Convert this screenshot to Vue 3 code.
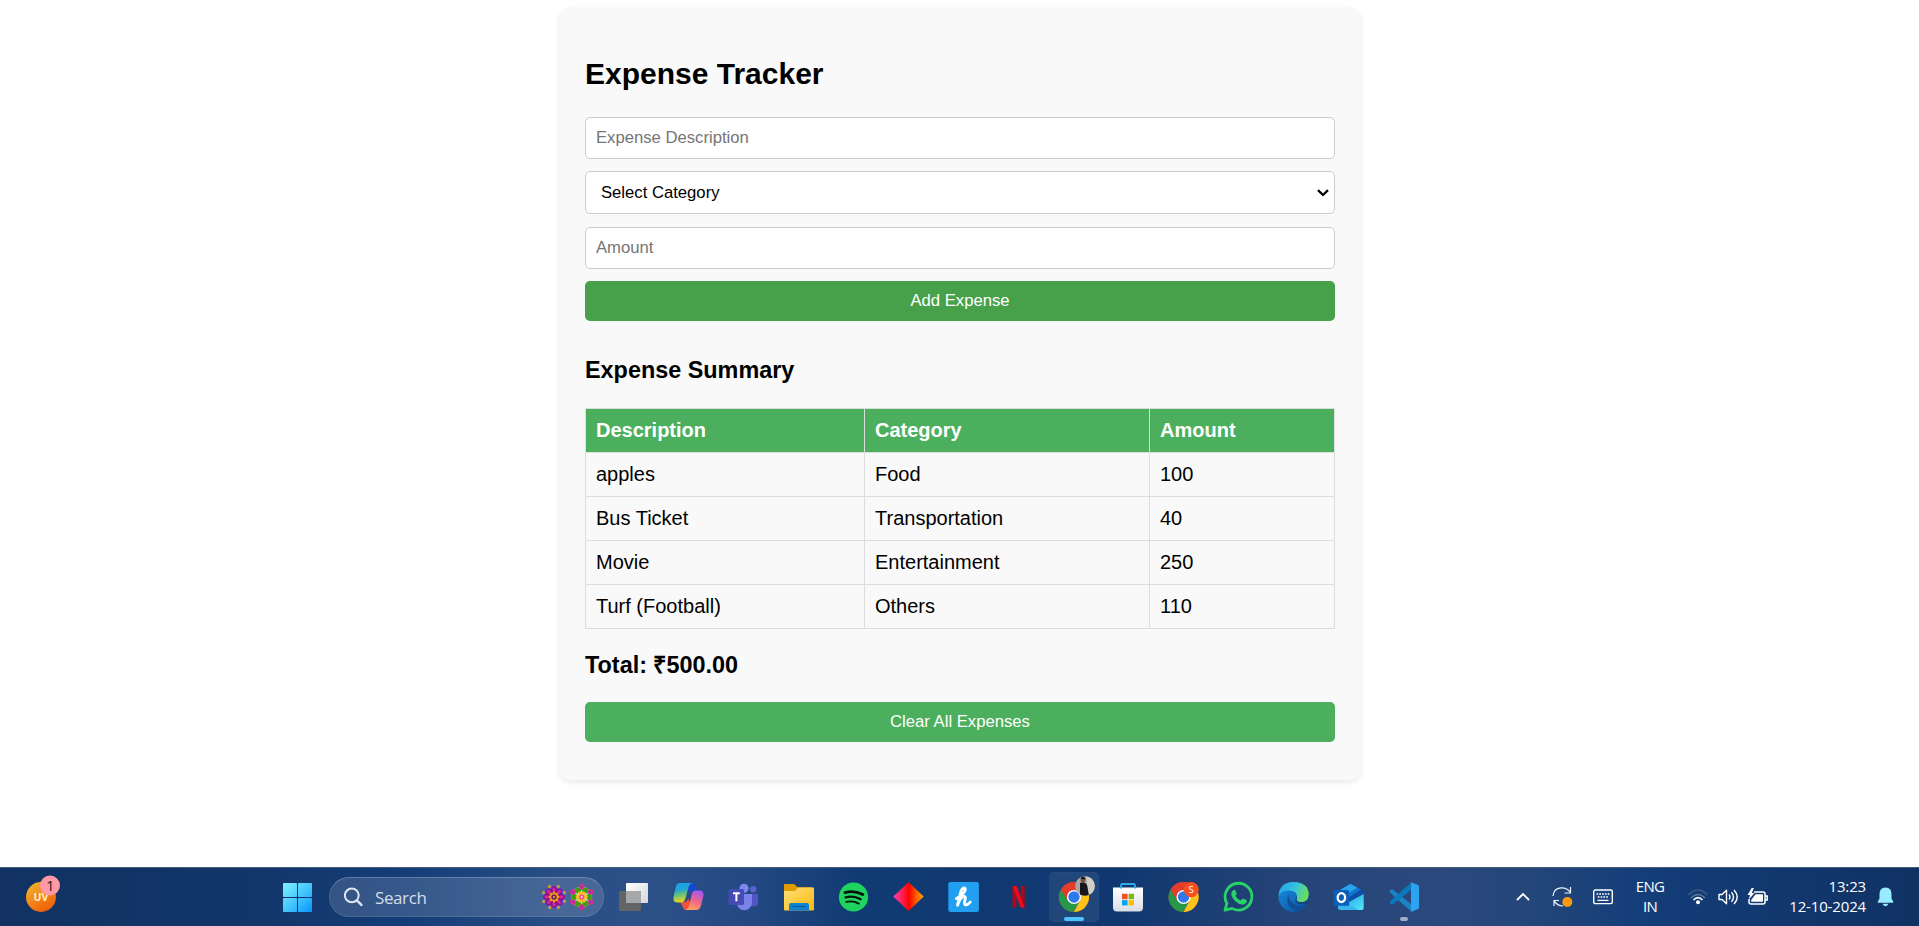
<script setup>
import { ref, computed } from 'vue'

const description = ref('')
const category = ref('')
const amount = ref('')
const expenses = ref([
  { description: 'apples', category: 'Food', amount: 100 },
  { description: 'Bus Ticket', category: 'Transportation', amount: 40 },
  { description: 'Movie', category: 'Entertainment', amount: 250 },
  { description: 'Turf (Football)', category: 'Others', amount: 110 },
])
const total = computed(() => expenses.value.reduce((sum, e) => sum + e.amount, 0).toFixed(2))

function addExpense() {
  if (!description.value || !category.value || !amount.value) return
  expenses.value.push({
    description: description.value,
    category: category.value,
    amount: Number(amount.value),
  })
}

const petals = [0, 45, 90, 135, 180, 225, 270, 315]
const sixths = [0, 60, 120, 180, 240, 300]
</script>

<template>
  <div class="screen">
    <main class="card">
      <h1>Expense Tracker</h1>
      <form class="form" @submit.prevent="addExpense">
        <input v-model="description" class="field" type="text" placeholder="Expense Description" />
        <div class="select-wrap">
          <select v-model="category" class="field select">
            <option value="">Select Category</option>
            <option>Food</option>
            <option>Transportation</option>
            <option>Entertainment</option>
            <option>Others</option>
          </select>
          <svg class="arrow" width="12" height="8" viewBox="0 0 12 8">
            <path d="M1 1.2 6 6 11 1.2" fill="none" stroke="#000" stroke-width="2.3" />
          </svg>
        </div>
        <input v-model="amount" class="field amount" type="text" placeholder="Amount" />
        <button class="btn btn-add" type="submit">Add Expense</button>
      </form>

      <h3 class="summary">Expense Summary</h3>
      <table>
        <colgroup><col class="c1" /><col class="c2" /><col class="c3" /></colgroup>
        <thead>
          <tr><th>Description</th><th>Category</th><th>Amount</th></tr>
        </thead>
        <tbody>
          <tr v-for="e in expenses" :key="e.description">
            <td>{{ e.description }}</td><td>{{ e.category }}</td><td>{{ e.amount }}</td>
          </tr>
        </tbody>
      </table>
      <h3 class="total">Total: ₹{{ total }}</h3>
      <button class="btn" type="button" @click="expenses = []">Clear All Expenses</button>
    </main>

    <footer class="taskbar">
      <svg class="defs" width="0" height="0">
        <defs>
          <linearGradient id="uv" x1="0" y1="0" x2=".7" y2="1"><stop offset="0" stop-color="#efbd32" /><stop offset=".6" stop-color="#f38118" /><stop offset="1" stop-color="#ef5d0a" /></linearGradient>
          <linearGradient id="win" gradientUnits="userSpaceOnUse" x1="0" y1="0" x2="29" y2="29"><stop offset="0" stop-color="#7ff0ff" /><stop offset=".5" stop-color="#47c8fb" /><stop offset="1" stop-color="#0796fb" /></linearGradient>
          <linearGradient id="cpA" x1="0" y1="0" x2=".2" y2="1"><stop offset="0" stop-color="#189ff1" /><stop offset=".4" stop-color="#1fa8cf" /><stop offset=".7" stop-color="#7bc768" /><stop offset="1" stop-color="#f3d21f" /></linearGradient>
          <linearGradient id="cpB" x1=".7" y1="0" x2=".3" y2="1"><stop offset="0" stop-color="#a259f1" /><stop offset=".5" stop-color="#f0628d" /><stop offset="1" stop-color="#ffa75a" /></linearGradient>
          <linearGradient id="folder" x1="0" y1="0" x2="1" y2="1"><stop offset="0" stop-color="#ffdf77" /><stop offset="1" stop-color="#fcb90f" /></linearGradient>
          <linearGradient id="dia"><stop offset="0" stop-color="#ff42ad" /><stop offset=".3" stop-color="#ff1e50" /><stop offset=".52" stop-color="#ff0000" /><stop offset=".75" stop-color="#ff5b00" /><stop offset="1" stop-color="#ffb000" /></linearGradient>
          <linearGradient id="edgeTop" x1="0" y1=".3" x2="1" y2=".6"><stop offset="0" stop-color="#25a5e8" /><stop offset=".5" stop-color="#35c3df" /><stop offset="1" stop-color="#70e04c" /></linearGradient>
          <linearGradient id="edgeBot" x1="0" y1="0" x2=".8" y2="1"><stop offset="0" stop-color="#1b8fe0" /><stop offset="1" stop-color="#0c56a8" /></linearGradient>
          <linearGradient id="store" x1="0" y1="0" x2="0" y2="1"><stop offset="0" stop-color="#fff" /><stop offset="1" stop-color="#d9dde4" /></linearGradient>
          <linearGradient id="olk" x1="0" y1="0" x2="1" y2="1"><stop offset="0" stop-color="#1a9be5" /><stop offset="1" stop-color="#58e5fa" /></linearGradient>
          <linearGradient id="tvLight" x1="0" y1="0" x2="1" y2="1"><stop offset="0" stop-color="#fff" /><stop offset="1" stop-color="#d5d7da" /></linearGradient>
          <clipPath id="avatarClip"><circle cx="39" cy="19" r="9.8" /></clipPath>
          <g id="chrome">
            <circle r="15" fill="#e33b2e" />
            <path d="M-13-7.5A15 15 0 0 0 0 15L6.1 3.5-6.1 3.5Z" fill="#279847" />
            <path d="M13-7.5A15 15 0 0 1 0 15L6.1 3.5 5-7Z" fill="#fcc31a" />
            <path d="M-13-7.5A15 15 0 0 1 13-7.5L0-7-6 3.6Z" fill="#e33b2e" />
            <circle r="7.1" fill="#fff" />
            <circle r="5.7" fill="#2f79ec" />
          </g>
        </defs>
      </svg>

      <svg class="widget" width="36" height="59" viewBox="0 0 36 59">
        <circle cx="15" cy="30" r="15" fill="url(#uv)" />
        <text x="15" y="33.8" text-anchor="middle" class="uv">UV</text>
        <circle cx="24" cy="18.5" r="10" fill="#ff98a5" />
        <text x="24.2" y="23.6" text-anchor="middle" class="one">1</text>
      </svg>

      <svg class="start" width="29" height="29" viewBox="0 0 29 29" fill="url(#win)">
        <rect width="14" height="14" rx=".8" /><rect x="15" width="14" height="14" rx=".8" />
        <rect y="15" width="14" height="14" rx=".8" /><rect x="15" y="15" width="14" height="14" rx=".8" />
      </svg>

      <div class="search">
        <svg width="19" height="20" viewBox="0 0 19 20" fill="none" stroke="#e1e7f0" stroke-width="2"><circle cx="7.8" cy="8.3" r="6.9" /><path d="m12.800 13.300 4.600 4.600" stroke-width="2.4" stroke-linecap="round" /></svg>
        <span>Search</span>
        <svg class="flowers" width="54" height="28" viewBox="0 0 54 28">
          <g transform="translate(13 14)">
            <g v-for="a in petals" :key="a" :transform="`rotate(${a + 22})`">
              <ellipse cy="-9.4" rx="3.4" ry="2.8" fill="#4164ef" />
              <circle cy="-11.4" r="1.6" fill="#c69a32" />
            </g>
            <circle r="9" fill="#7a1480" />
            <g v-for="a in petals" :key="'m' + a" :transform="`rotate(${a})`">
              <ellipse cy="-8" rx="2.8" ry="3" fill="#8c168f" />
              <ellipse cy="-7.2" rx="1.4" ry="2.2" fill="#df249c" />
              <circle cy="-4" r="1.4" fill="#f5a812" />
            </g>
            <circle r="3.8" fill="#ee9516" /><circle r="2.6" fill="#6b176b" /><circle r="1" fill="#f1b63d" />
          </g>
          <g transform="translate(40.7 14)">
            <circle r="10.500" fill="#bfe7dd" />
            <g v-for="a in sixths" :key="a" :transform="`rotate(${a})`">
              <circle cy="-10" r="2.9" fill="#e72398" /><circle cy="-9.7" r="1" fill="#6848c6" />
            </g>
            <g v-for="a in sixths" :key="'g' + a" :transform="`rotate(${a + 30})`">
              <circle cy="-7.5" r="3.1" fill="#459b13" />
              <circle cy="-4" r="2" fill="#ffc22b" />
            </g>
            <circle r="4.4" fill="#ffbd24" /><circle r="2.6" fill="#ef4b9a" /><circle r="1.1" fill="#ffe6b0" />
          </g>
        </svg>
      </div>

      <div class="apps">
        <!-- Task view -->
        <svg viewBox="0 0 55 59"><rect x="13" y="24" width="22" height="20" rx="1" fill="#626466" /><rect x="20" y="16" width="22" height="20" rx=".8" fill="url(#tvLight)" /><rect x="20" y="24" width="15" height="12" fill="#a5a7a9" /></svg>
        <!-- Copilot -->
        <svg viewBox="0 0 55 59">
          <path d="M27 16h4.500q2.600 0 3.400 3l1.400 5H30q-3 0-4 3Z" fill="#1747cf" />
          <path d="M19.500 35h5l3-3 3 8-1.500 3h-3.500q-3 0-4-3.500Z" fill="#f0543c" />
          <path d="M18.800 16H32q-3.500.4-4.400 4l-3.200 11.500q-1 4-4.800 4h-3.300q-5 0-3.700-5.700L14.800 20q1-4 4-4Z" fill="url(#cpA)" />
          <path d="M34.500 23.400h3.700q5.200 0 4.100 5.600L40 38.500Q38.800 43 35.200 43H23.500q3.500-.4 4.500-4l2.700-11.500q1-4.100 3.800-4.100Z" fill="url(#cpB)" />
        </svg>
        <!-- Teams -->
        <svg viewBox="0 0 55 59">
          <circle cx="37.2" cy="22.2" r="3.2" fill="#5a60d0" /><path d="M33 27h9v8q0 4.5-4.5 4.5H33Z" fill="#5055c4" />
          <circle cx="28" cy="21.3" r="4.6" fill="#7f86ed" /><path d="M20.5 27H36v8.5a7.700 7.700 0 0 1-15.500 0Z" fill="#7b83eb" />
          <rect x="12.5" y="22" width="15.5" height="16" rx="1.7" fill="#444bb3" /><path d="M17 26.300h6.800M20.400 26.300v8" stroke="#fff" stroke-width="2" />
        </svg>
        <!-- File explorer -->
        <svg viewBox="0 0 55 59"><path d="M13 18q0-1 1-1h8.500q1 0 1.800 1l2.200 2.300H41V26H13Z" fill="#e09b00" /><path d="M13 24h11l3-3.600h15q1 0 1 1v21.200q0 1-1 1H14q-1 0-1-1Z" fill="url(#folder)" /><path d="M18 43.600V38q0-2 2-2h16q2 0 2 2v5.600Z" fill="#1181d1" /><path d="M21.500 39.500h13" stroke="#0b558f" stroke-width="1" /></svg>
        <!-- Spotify -->
        <svg viewBox="0 0 55 59"><circle cx="27.5" cy="30" r="14.6" fill="#1ed35e" /><g fill="none" stroke="#06130b" stroke-linecap="round"><path d="M19 25.600q9-2.600 17.800 2" stroke-width="2.8" /><path d="M19.600 30.400q7.700-2.200 15 1.800" stroke-width="2.3" /><path d="M20.200 34.900q6.800-1.700 12.600 1.700" stroke-width="1.9" /></g></svg>
        <!-- Diamond launcher -->
        <svg viewBox="0 0 55 59"><path d="M27.500 15.200 42.700 29.600 27.500 44 12.300 29.600Z" fill="url(#dia)" /></svg>
        <!-- Cursive h -->
        <svg viewBox="0 0 55 59"><rect x="12.3" y="15" width="30.6" height="30" rx="2.2" fill="#219ff0" /><path d="M20.500 31.500c5-2.500 9.200-7.200 8.700-9.600-.4-1.800-3-1.200-4.200 2.400L21.500 38.200c2-6 4.700-9.200 7-8.700 2.600.6-1.400 6.500.4 8 1.300 1 3.800-.5 5.300-2.500" fill="none" stroke="#fff" stroke-width="2.9" stroke-linecap="round" stroke-linejoin="round" /></svg>
        <!-- Netflix -->
        <svg viewBox="0 0 55 59"><path d="M21.500 19h4v21.300l-4 .4ZM29.700 19h4v21.700l-4-.4Z" fill="#a80b17" /><path d="M21.500 19h4.200l8 21.700-4.200-.4Z" fill="#ed0b18" /></svg>
        <!-- Chrome, active profile -->
        <svg viewBox="0 0 55 59">
          <rect x="3.5" y="5.500" width="49" height="49" rx="4.500" fill="#fff" fill-opacity=".07" stroke="#fff" stroke-opacity=".06" />
          <use href="#chrome" x="28" y="30" />
          <g clip-path="url(#avatarClip)"><rect x="29" y="9" width="20" height="20" fill="#aaa7a2" /><path d="M40 9h9v20h-6Z" fill="#d2cfc8" /><path d="M34 16q5-2 7 2l2 11H34Z" fill="#15171d" /><circle cx="37" cy="13" r="2.5" fill="#775444" /><path d="M34.600 12q1-3.200 4-1.800l1 2Z" fill="#17130f" /></g>
          <rect x="18" y="50" width="20" height="4" rx="2" fill="#4cc2ff" />
        </svg>
        <!-- Microsoft Store -->
        <svg viewBox="0 0 55 59"><path d="M12 20.400h30v20.200q0 4-4 4H16q-4 0-4-4Z" fill="url(#store)" /><path d="M20 21.600v-3q0-1.600 1.600-1.600h10.800q1.600 0 1.600 1.600v3" fill="none" stroke="#2dafeb" stroke-width="1.8" /><path d="M21 26.800h5.600v5.400H21Z" fill="#f25022" /><path d="M27.600 26.800h5.400v5.400h-5.400Z" fill="#7fba00" /><path d="M21 33.100h5.600v5.300H21Z" fill="#00a4ef" /><path d="M27.600 33.100h5.400v5.300h-5.400Z" fill="#ffb900" /></svg>
        <!-- Chrome, S profile -->
        <svg viewBox="0 0 55 59"><use href="#chrome" x="27.6" y="30" /><circle cx="35.2" cy="22.6" r="7.6" fill="#f4511e" /><text x="35" y="26" text-anchor="middle" class="s">S</text></svg>
        <!-- WhatsApp -->
        <svg viewBox="0 0 55 59"><path d="M14 43.200 15.900 36.400A13.400 13.400 0 1 1 21 41.400Z" fill="none" stroke="#25d366" stroke-width="2.8" stroke-linejoin="round" /><path d="M22 23.200q1.500-1.200 2.400.2l1.200 2.800q.3.900-.4 1.600l-.9 1q2 3.400 5.400 4.700l1.500-1.600q.6-.5 1.300-.2l2.800 1.400q.8.500.4 1.700-1.200 3-4.700 2.800-3.300-.4-6.700-3.400-4-4-4-7.100 0-2.600 1.700-3.900Z" fill="#25d366" /></svg>
        <!-- Edge -->
        <svg viewBox="0 0 55 59">
          <circle cx="27.5" cy="30" r="15" fill="url(#edgeBot)" />
          <path d="M12.500 29Q13.500 15 27.500 15 42.700 15.500 42.700 27.500 42.400 35 34.500 35.200 29.500 35.200 29.500 33 31 31.500 31 29.200 30.700 24.500 24 23.600 16 23 12.500 29Z" fill="url(#edgeTop)" />
          <path d="M22.500 27Q18.500 36 26 42 30 45 35 43 39 41 41.300 37 35 40 29 37.500 22.500 34.500 22.500 27Z" fill="#124f99" />
          <path d="M30.600 28Q30.600 31.500 29 33 29.700 38.500 41 37 42.600 35.200 43 32 41 35.200 35 35.200 29.500 35 31 31Z" fill="#17437f" />
        </svg>
        <!-- Outlook -->
        <svg viewBox="0 0 55 59">
          <path d="M17 24 29.500 16.700 42.700 24v10L28 40 17 34Z" fill="#0b4fa5" />
          <path d="m17 24 12.500-7.300 7 4L22 30h-5Z" fill="#27a5ea" />
          <path d="m36.500 20.700 3.200 1.800L26 31.500l-4-1.500Z" fill="#1277cf" />
          <path d="M42.700 27v14q0 2-2 2H19.500l8.500-8Z" fill="url(#olk)" />
          <path d="M17 36l11 2 10 5H19q-2 0-2-2Z" fill="#39b5ee" />
          <rect x="12.600" y="23" width="15.600" height="15.700" rx="1.500" fill="#0b5fb8" /><ellipse cx="20.400" cy="30.600" rx="3.700" ry="4.400" fill="none" stroke="#fff" stroke-width="2.300" />
        </svg>
        <!-- VS Code -->
        <svg viewBox="0 0 55 59">
          <path d="m13.300 24.500 2-2q.7-.6 1.400 0L36 37.800V45Q13.800 26 13.300 24.500Z" fill="#1b83c6" />
          <path d="m13.300 35.600 2 2q.7.600 1.400 0L36 22.300V15Q13.800 34 13.300 35.600Z" fill="#0879bd" />
          <path d="M35 15.200 42 18q1 .5 1 1.600v20.800q0 1.100-1 1.600l-7 2.900V15.200Z" fill="#2ba3f2" />
          <rect x="24" y="50" width="8" height="4" rx="2" fill="#a4adc6" />
        </svg>
      </div>

      <div class="tray">
        <svg class="t-chevron" width="14" height="10" viewBox="0 0 14 10"><path d="m1 8 6-6 6 6" fill="none" stroke="#fff" stroke-width="1.900" /></svg>
        <svg class="t-sync" width="21" height="22" viewBox="0 0 21 22"><g fill="none" stroke="#edf2fa" stroke-width="1.200"><path d="M1 10Q1.500 2.500 9 1.800 15 1.500 18.500 6.500M18.500 1v6h-6M7 14.500H2v5.500M2 14.600Q5 20 11 20" /></g><circle cx="15.300" cy="16" r="5" fill="#ff9b0a" /></svg>
        <svg class="t-keys" width="20" height="16" viewBox="0 0 20 16"><rect x=".7" y="1" width="18.600" height="13.600" rx="1.500" fill="none" stroke="#fff" stroke-width="1.400" /><path d="M3.500 5h13M4.800 8h11" stroke="#fff" stroke-width="1.700" stroke-dasharray="1.700 1.100" /><path d="M4.500 11.400h11" stroke="#fff" stroke-width="1.300" /></svg>
        <div class="lang">ENG<br />IN</div>
        <svg class="t-wifi" width="22" height="18" viewBox="0 0 22 18" fill="none" stroke-width="1.600"><path d="M1.500 7Q11-3 20.500 7" stroke="#3b5c88" /><path d="M4 10Q11 3 18 10" stroke="#5c779d" /><path d="M6.500 12Q11 7.300 15.500 12" stroke="#fff" /><circle cx="11" cy="14.300" r="2" fill="#fff" /></svg>
        <svg class="t-sound" width="22" height="18" viewBox="0 0 22 18" fill="none" stroke="#fff" stroke-width="1.400"><path d="M1 6.500h3L8.500 2.300v13.400L4 11.500H1Z" stroke-linejoin="round" /><path d="M11 6.500q2 2.500 0 5M13.500 4.300q4 4.700 0 9.400M16 2q6.500 7 0 14" /></svg>
        <svg class="t-battery" width="21" height="18" viewBox="0 0 21 18"><path d="M7 4h9q2 0 2 2v8q0 2-2 2H4q-2 0-2-2v-3M18.500 8h1.700v4h-1.700" fill="none" stroke="#fff" stroke-width="1.500" /><path d="M8.500 6.200H16v7.600H4.200V12Z" fill="#fff" /><path d="M5-.5.500 7H3l-1.200 4.500L7.500 5H4.800L7-.5Z" fill="#fff" /></svg>
        <div class="clock">13:23<br />12-10-2024</div>
        <svg class="bell" width="17" height="20" viewBox="0 0 17 20"><path d="M8.500.5q6 .2 6 6.500v4.500l1.800 3.200q.4 1.100-.9 1.100H1.600q-1.300 0-.9-1.100l1.800-3.200V7q0-6.300 6-6.500ZM5.700 16.800h5.600q-.5 2.400-2.800 2.400t-2.800-2.400Z" fill="#98ecff" /></svg>
      </div>
    </footer>
  </div>
</template>

<style>
body {
  margin: 0;
  background: #fff;
  overflow: hidden;
}
</style>

<style scoped>
.screen {
  box-sizing: border-box;
  width: 100%;
  height: 926px;
  padding-top: 8px;
  display: flex;
  flex-direction: column;
  align-items: center;
  font-family: "Liberation Sans", Arial, sans-serif;
  color: #000;
}
.card {
  box-sizing: border-box;
  width: 800px;
  height: 772px;
  margin-left: 1px;
  padding: 25px;
  background: #f9f9f9;
  border-radius: 10px;
  box-shadow: 0 2px 6px rgba(0, 0, 0, 0.1);
}
h1 {
  margin: 23px 0 26px;
  font-size: 30px;
  line-height: 35px;
}
.form {
  display: flex;
  flex-direction: column;
}
.field {
  box-sizing: border-box;
  display: block;
  width: 100%;
  height: 42px;
  padding: 0 10px;
  border: 1px solid #ccc;
  border-radius: 5px;
  background: #fff;
  color: #000;
  font: 16.667px "Liberation Sans", Arial, sans-serif;
  outline: none;
}
.field::placeholder {
  color: #757575;
}
.select-wrap {
  position: relative;
  margin: 12px 0 13px;
}
.select {
  height: 43px;
  padding-left: 15px;
  appearance: none;
}
.arrow {
  position: absolute;
  right: 6px;
  top: 18px;
}
.btn {
  display: block;
  width: 100%;
  height: 40px;
  padding: 0;
  border: 0;
  border-radius: 5px;
  background: #4caf5d;
  color: #fff;
  font: 16.667px "Liberation Sans", Arial, sans-serif;
}
.btn-add {
  margin-top: 12px;
  background: #47a14a;
}
h3 {
  font-size: 23.4px;
  line-height: 27px;
}
.summary {
  margin: 36px 0 24px;
}
table {
  width: 750px;
  table-layout: fixed;
  border-collapse: collapse;
  font-size: 20px;
}
.c1 {
  width: 279px;
}
.c2 {
  width: 285px;
}
.c3 {
  width: 185px;
}
th,
td {
  box-sizing: border-box;
  height: 44px;
  padding: 0 10px 1px;
  border: 1px solid #ddd;
  text-align: left;
  line-height: 23px;
}
th {
  background: #4caf5d;
  color: #fff;
}
.total {
  margin: 23px 0;
}

/* Taskbar */
.taskbar {
  box-sizing: border-box;
  width: 100%;
  height: 59px;
  margin-top: auto;
  padding-left: 26px;
  display: flex;
  align-items: center;
  box-shadow: inset 0 1px #44597a;
  background: linear-gradient(90deg, #113262 0, #123669 240px, #143c77 400px, #294f86 560px, #2c5189 660px, #224781 760px, #103a73 860px, #103870 1120px, #244377 1280px, #2b497c 1440px, #244679 1530px, #143e79 1640px, #123a73 1720px, #103263 1919px);
  color: #fff;
  font-family: "Open Sans", "Noto Sans", sans-serif;
}
.defs {
  position: absolute;
}
svg {
  flex: none;
  display: block;
}
.uv {
  font: 700 10.5px "Open Sans", sans-serif;
  fill: #fff0cf;
}
.one {
  font: 15px "Open Sans", sans-serif;
  fill: #261b25;
}
.s {
  font: 9.5px "Open Sans", sans-serif;
  fill: #fff;
}
.start {
  margin: 2px 17px 0 221px;
}
.search {
  box-sizing: border-box;
  flex: none;
  width: 275px;
  height: 40px;
  margin-top: 1px;
  padding: 0 8px 0 14px;
  display: flex;
  align-items: center;
  border: 1px solid rgba(255, 255, 255, 0.1);
  border-top-color: rgba(255, 255, 255, 0.22);
  border-radius: 20px;
  background: rgba(255, 255, 255, 0.14);
  color: #d5deec;
  font-size: 17px;
}
.search span {
  margin-left: 12px;
  letter-spacing: -0.4px;
}
.flowers {
  margin-left: auto;
}
.apps {
  flex: none;
  display: flex;
  margin-left: 2px;
}
.apps svg {
  width: 55px;
  height: 59px;
}
.tray {
  flex: 1;
  display: flex;
  align-items: center;
  padding: 0 25px 0 85px;
  font-size: 15px;
  line-height: 20px;
}
.t-sync {
  margin-left: 22px;
}
.t-keys {
  margin-left: 20px;
}
.lang {
  width: 40px;
  margin: -1px 0 0 17px;
  text-align: center;
  letter-spacing: -0.7px;
}
.t-wifi {
  margin-left: 17px;
}
.t-sound {
  margin-left: 9px;
}
.t-battery {
  margin-left: 7px;
}
.clock {
  margin: -1px 0 0 auto;
  text-align: right;
  letter-spacing: -0.15px;
}
.bell {
  margin-left: 11px;
}
</style>
